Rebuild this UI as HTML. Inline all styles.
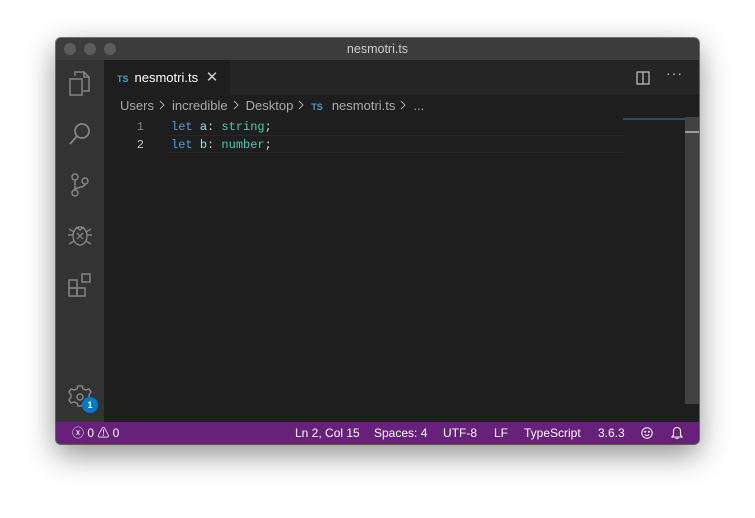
<!DOCTYPE html>
<html><head><style>
*{margin:0;padding:0;box-sizing:border-box}
body{width:755px;height:518px;background:#fff;position:relative;overflow:hidden;font-family:"Liberation Sans",sans-serif}
.win{position:absolute;left:56px;top:38px;width:643px;height:406px;background:#1e1e1e;border-radius:5px;overflow:hidden;box-shadow:0 10px 30px rgba(0,0,0,.45),0 0 0 1px rgba(0,0,0,.5)}
.title{position:absolute;left:0;top:0;width:643px;height:22px;background:#3c3c3c;color:#ccc;font-size:12.5px;text-align:center;line-height:22px}
.dot{position:absolute;top:5px;width:12px;height:12px;border-radius:50%;background:#5d5d5d}
.act{position:absolute;left:0;top:22px;width:48px;height:362px;background:#333}
.tabs{position:absolute;left:48px;top:22px;width:595px;height:35px;background:#252526}
.tab{position:absolute;left:0;top:0;width:126px;height:35px;background:#1e1e1e;color:#fff;font-size:13px;line-height:35px;padding-left:13px}
.ts{color:#519aba;font-size:9px;font-weight:bold;margin-right:6px}
.bc{position:absolute;left:64px;top:60px;color:#a9a9a9;font-size:13px;line-height:16px}
.bc .ts{margin-right:9px}
.ch{display:inline-block;width:6px;height:9px;margin:0 7px 0 5px;vertical-align:0}
.code{position:absolute;top:80px;font-family:"Liberation Mono",monospace;font-size:12px;line-height:18px}
.status{position:absolute;left:0;top:384px;width:643px;height:22px;background:#68217a;color:#fff;font-size:12px;line-height:22px}
.status span{position:absolute;top:0}
svg{position:absolute}
.ch svg{position:static}
</style></head><body>
<div class="win">
<div class="title">nesmotri.ts</div>
<div class="dot" style="left:8px"></div><div class="dot" style="left:28px"></div><div class="dot" style="left:48px"></div>
<div class="act">
<svg style="left:12px;top:11px" width="24" height="26" viewBox="0 0 24 26" fill="none" stroke="#858585" stroke-width="1.5"><path d="M7 5V1h9l5 5v14h-6"/><path d="M16 1v5h5"/><rect x="2" y="8" width="12" height="16"/></svg>
<svg style="left:12px;top:62px" width="24" height="26" viewBox="0 0 24 26" fill="none" stroke="#858585" stroke-width="1.8"><circle cx="14" cy="9" r="7"/><path d="M9 14L2 22"/></svg>
<svg style="left:12px;top:112px" width="24" height="26" viewBox="0 0 24 26" fill="none" stroke="#858585" stroke-width="1.5"><circle cx="7" cy="5" r="3"/><circle cx="7" cy="21" r="3"/><circle cx="17" cy="9" r="3"/><path d="M7 8v10M17 12c0 4-10 3-10 6"/></svg>
<svg style="left:11px;top:161px" width="26" height="28" viewBox="0 0 26 28" fill="none" stroke="#858585" stroke-width="1.4"><ellipse cx="13" cy="15" rx="7" ry="9"/><path d="M9 6l4 3 4-3M1 14h5M20 14h5M2 8l5 3M24 8l-5 3M2 23l5-3M24 23l-5-3M10 12l6 6M16 12l-6 6"/></svg>
<svg style="left:11px;top:212px" width="26" height="26" viewBox="0 0 26 26" fill="none" stroke="#858585" stroke-width="1.5"><rect x="2" y="8" width="8" height="8"/><rect x="2" y="16" width="8" height="8"/><rect x="10" y="16" width="8" height="8"/><rect x="15" y="2" width="8" height="8"/></svg>
<svg style="left:11px;top:324px" width="26" height="26" viewBox="0 0 26 26" fill="none" stroke="#858585" stroke-width="1.5"><path d="M11 2h4l1 3 3 1 3-1 2 3-2 3v2l2 3-2 3-3-1-3 1-1 3h-4l-1-3-3-1-3 1-2-3 2-3v-2L2 8l2-3 3 1 3-1z"/><circle cx="13" cy="13" r="3"/></svg>
<div style="position:absolute;left:26px;top:337px;width:16px;height:16px;border-radius:50%;background:#007acc;color:#fff;font-size:9px;font-weight:bold;text-align:center;line-height:16px">1</div>
</div>
<div class="tabs"><div class="tab"><span class="ts">TS</span>nesmotri.ts <span style="color:#ccc;font-size:15px;margin-left:4px">✕</span></div>
<svg style="left:532px;top:11px" width="14" height="14" viewBox="0 0 14 14" fill="none" stroke="#c5c5c5" stroke-width="1.2"><rect x="1" y="1" width="12" height="12"/><path d="M7 1v12"/></svg>
<span style="position:absolute;left:562px;top:5px;color:#c5c5c5;font-size:14px;letter-spacing:1px">···</span>
</div>
<div class="bc">Users<span class="ch"><svg width="6" height="10" viewBox="0 0 6 10" fill="none" stroke="#a9a9a9"><path d="M1 1l4 4-4 4"/></svg></span>incredible<span class="ch"><svg width="6" height="10" viewBox="0 0 6 10" fill="none" stroke="#a9a9a9"><path d="M1 1l4 4-4 4"/></svg></span>Desktop<span class="ch"><svg width="6" height="10" viewBox="0 0 6 10" fill="none" stroke="#a9a9a9"><path d="M1 1l4 4-4 4"/></svg></span><span class="ts">TS</span>nesmotri.ts<span class="ch"><svg width="6" height="10" viewBox="0 0 6 10" fill="none" stroke="#a9a9a9"><path d="M1 1l4 4-4 4"/></svg></span>...</div>
<div class="code" style="left:64px;width:40px;text-align:right;color:#858585;padding-right:16px">1<br><span style="color:#c6c6c6">2</span></div>
<div style="position:absolute;left:112px;top:97px;width:456px;height:18px;border-top:1px solid #282828;border-bottom:1px solid #282828"></div>
<div class="code" style="left:115px"><span style="color:#569cd6">let</span> <span style="color:#9cdcfe">a</span><span style="color:#d4d4d4">:</span> <span style="color:#4ec9b0">string</span><span style="color:#d4d4d4">;</span><br><span style="color:#569cd6">let</span> <span style="color:#9cdcfe">b</span><span style="color:#d4d4d4">:</span> <span style="color:#4ec9b0">number</span><span style="color:#d4d4d4">;</span></div>
<div style="position:absolute;left:567px;top:80px;width:62px;height:2px;background:#264f78"></div>
<div style="position:absolute;left:629px;top:79px;width:14px;height:287px;background:#424242"></div>
<div style="position:absolute;left:629px;top:93px;width:14px;height:2px;background:#999"></div>
<div class="status">
<span style="left:16px">ⓧ 0 ⚠ 0</span>
<span style="left:239px">Ln 2, Col 15</span>
<span style="left:318px">Spaces: 4</span>
<span style="left:387px">UTF-8</span>
<span style="left:438px">LF</span>
<span style="left:468px">TypeScript</span>
<span style="left:542px">3.6.3</span>
<svg style="left:585px;top:5px" width="12" height="12" viewBox="0 0 12 12" fill="none" stroke="#fff" stroke-width="1"><circle cx="6" cy="6" r="5.2"/><circle cx="4.2" cy="4.8" r=".5" fill="#fff"/><circle cx="7.8" cy="4.8" r=".5" fill="#fff"/><path d="M3.8 7.5q2.2 2 4.4 0"/></svg>
<svg style="left:615px;top:4px" width="12" height="14" viewBox="0 0 12 14" fill="none" stroke="#fff" stroke-width="1.1"><path d="M6 1.5c-2.5 0-3.5 2-3.5 4v3.5L1 11h10l-1.5-2V5.5c0-2-1-4-3.5-4z"/><path d="M4.5 12.5h3"/></svg>
</div>
</div>
</body></html>
